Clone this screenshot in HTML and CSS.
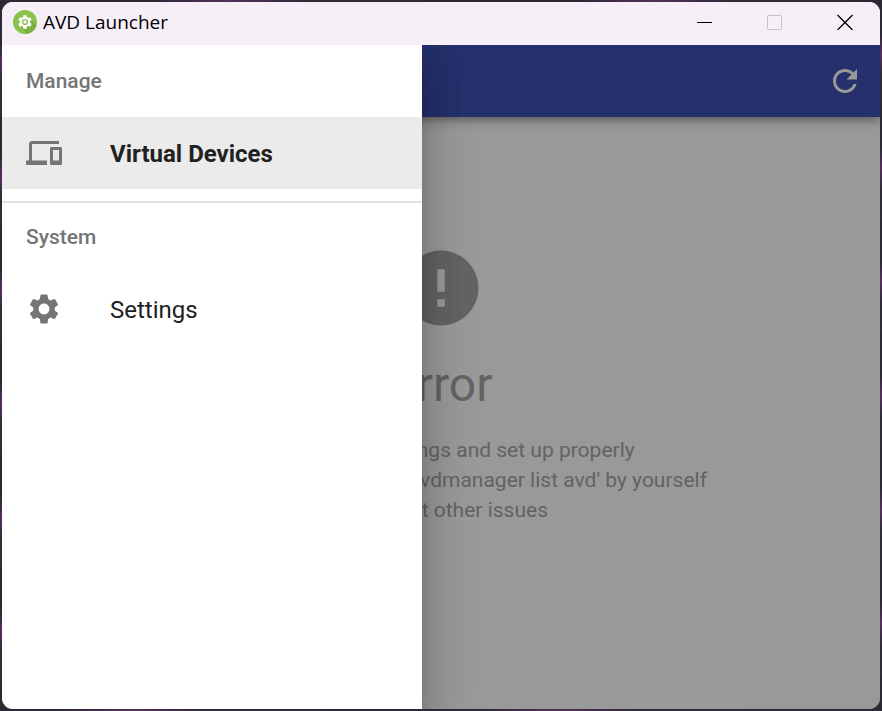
FILE: index.html
```html
<!DOCTYPE html>
<html lang="en">
<head>
<meta charset="utf-8">
<title>AVD Launcher</title>
<link rel="stylesheet" href="styles.css">
</head>
<body>
<div class="window">
  <header class="titlebar">
    <svg class="logo" viewBox="0 0 24 24" aria-hidden="true">
      <circle cx="12" cy="12" r="12" fill="#8bc34a"/>
      <path d="M17 9l6.500 6.500A12 12 0 0 1 14 23.800L7.500 17z" fill="#7cb043"/>
      <path transform="translate(3.800 3.800) scale(.68)" fill="#fff" fill-rule="evenodd" d="M19.430 12.980c.04-.32.07-.64.07-.98s-.03-.66-.07-.98l2.110-1.650c.19-.15.24-.42.12-.64l-2-3.460c-.12-.22-.39-.3-.61-.22l-2.490 1c-.52-.4-1.080-.73-1.690-.98l-.38-2.650C14.460 2.180 14.250 2 14 2h-4c-.25 0-.46.18-.49.42l-.38 2.650c-.61.25-1.170.59-1.690.98l-2.490-1c-.23-.09-.49 0-.61.22l-2 3.460c-.13.22-.07.49.12.64l2.110 1.650c-.04.32-.07.65-.07.98s.03.66.07.98l-2.110 1.650c-.19.15-.24.42-.12.64l2 3.460c.12.22.39.3.61.22l2.490-1c.52.4 1.080.73 1.690.98l.38 2.650c.03.24.24.42.49.42h4c.25 0 .46-.18.49-.42l.38-2.650c.61-.25 1.170-.59 1.690-.98l2.490 1c.23.09.49 0 .61-.22l2-3.460c.12-.22.07-.49-.12-.64zM12 16.500a4.500 4.500 0 1 1 0-9 4.500 4.500 0 0 1 0 9z"/>
      <circle cx="12" cy="12" r="1.800" fill="#fff"/>
    </svg>
    <span class="title">AVD Launcher</span>
    <button class="control" type="button" aria-label="Minimize"><svg viewBox="0 0 16 16"><path d="M0 8.500h15" stroke="#000"/></svg></button>
    <button class="control" type="button" aria-label="Maximize" disabled><svg viewBox="0 0 16 16"><rect x=".5" y="1.500" width="14" height="14" rx="1" stroke="#c5c0c6"/></svg></button>
    <button class="control" type="button" aria-label="Close"><svg viewBox="0 0 16 16"><path d="M.5 1l15 15M15.500 1l-15 15" stroke="#000" stroke-width="1.300"/></svg></button>
  </header>
  <div class="app">
    <div class="appbar">
      <button class="refresh" type="button" aria-label="Refresh"><svg viewBox="0 0 24 24"><path d="M17.650 6.350C16.200 4.900 14.210 4 12 4c-4.420 0-7.990 3.580-7.990 8s3.570 8 7.990 8c3.730 0 6.840-2.550 7.730-6h-2.080c-.82 2.330-3.040 4-5.650 4-3.310 0-6-2.690-6-6s2.690-6 6-6c1.660 0 3.140.69 4.220 1.780L13 11h7V4l-2.350 2.350z"/></svg></button>
    </div>
    <main class="content">
      <svg class="error-icon" viewBox="0 0 24 24" aria-hidden="true"><path d="M12 2C6.480 2 2 6.480 2 12s4.480 10 10 10 10-4.480 10-10S17.520 2 12 2zm1 15h-2v-2h2v2zm0-4h-2V7h2v6z"/></svg>
      <h1 class="heading">Error</h1>
      <p class="message">Please check settings and set up properly<br>You could also try to run 'avdmanager list avd' by yourself<br>to find out other issues</p>
    </main>
    <div class="backdrop"></div>
    <nav class="drawer">
      <h2 class="subheader">Manage</h2>
      <a class="item selected" href="#devices">
        <svg viewBox="0 0 24 24" aria-hidden="true"><path d="M4 6h18V4H4c-1.100 0-2 .9-2 2v11H0v3h14v-3H4V6zm19 2h-6c-.55 0-1 .45-1 1v10c0 .55.45 1 1 1h6c.55 0 1-.45 1-1V9c0-.55-.45-1-1-1zm-1 9h-4v-7h4v7z"/></svg>
        <span>Virtual Devices</span>
      </a>
      <hr class="divider">
      <h2 class="subheader">System</h2>
      <a class="item" href="#settings">
        <svg viewBox="0 0 24 24" aria-hidden="true"><path d="M19.140 12.940c.04-.3.06-.61.06-.94 0-.32-.02-.64-.07-.94l2.030-1.580c.18-.14.23-.41.12-.61l-1.920-3.320c-.12-.22-.37-.29-.59-.22l-2.390.96c-.5-.38-1.030-.7-1.620-.94l-.36-2.540c-.04-.24-.24-.41-.48-.41h-3.840c-.24 0-.43.17-.47.41l-.36 2.540c-.59.24-1.130.57-1.620.94l-2.390-.96c-.22-.08-.47 0-.59.22L2.740 8.870c-.12.21-.08.47.12.61l2.030 1.580c-.05.3-.09.63-.09.94s.02.64.07.94l-2.030 1.580c-.18.14-.23.41-.12.61l1.920 3.320c.12.22.37.29.59.22l2.390-.96c.5.38 1.030.7 1.620.94l.36 2.540c.05.24.24.41.48.41h3.840c.24 0 .44-.17.47-.41l.36-2.540c.59-.24 1.130-.56 1.620-.94l2.390.96c.22.08.47 0 .59-.22l1.920-3.320c.12-.22.07-.47-.12-.61l-2.010-1.580zM12 15.600c-1.980 0-3.600-1.620-3.600-3.600s1.620-3.600 3.600-3.600 3.600 1.620 3.600 3.600-1.620 3.600-3.600 3.600z"/></svg>
        <span>Settings</span>
      </a>
    </nav>
  </div>
</div>
</body>
</html>
```
FILE: styles.css
```css
* {
  box-sizing: border-box;
}

body {
  margin: 0;
  min-height: 100vh;
  padding: 2px;
  display: flex;
  font-family: Roboto, sans-serif;
  background: repeating-linear-gradient(165deg, #2b2934 0 40px, #54305c 60px, #2f2c38 80px 110px);
}

.window {
  flex: 1;
  display: flex;
  flex-direction: column;
  border-radius: 11px;
  overflow: hidden;
  background: #fff;
}

.titlebar {
  display: flex;
  align-items: center;
  height: 43px;
  padding: 0 0 3px 11px;
  background: #f6eff8;
}

.logo {
  width: 24px;
  height: 24px;
  margin-right: 6px;
}

.title {
  flex: 1;
  font: 19px/24px "Open Sans", sans-serif;
  color: #000;
}

.control {
  width: 70px;
  height: 40px;
  padding: 0;
  border: 0;
  background: none;
  display: flex;
  align-items: center;
  justify-content: center;
}

.control svg {
  width: 16px;
  height: 16px;
  fill: none;
}

.app {
  flex: 1;
  position: relative;
  display: flex;
  flex-direction: column;
  overflow: hidden;
}

.appbar {
  height: 72px;
  padding-right: 17px;
  display: flex;
  align-items: center;
  justify-content: flex-end;
  background: #3f51b5;
  box-shadow: 0 3px 6px -1px rgba(0, 0, 0, .2), 0 6px 8px rgba(0, 0, 0, .14), 0 2px 15px rgba(0, 0, 0, .12);
}

.refresh {
  padding: 0;
  border: 0;
  background: none;
  display: flex;
}

.refresh svg {
  width: 36px;
  height: 36px;
  fill: #fff;
}

.content {
  flex: 1;
  padding-top: 126px;
  display: flex;
  flex-direction: column;
  align-items: center;
  text-align: center;
  color: #a6a6a6;
}

.error-icon {
  width: 90px;
  height: 90px;
  fill: currentColor;
}

.heading {
  margin: 24px 0 22px;
  font-size: 48px;
  line-height: 56px;
  font-weight: 400;
}

.message {
  margin: 0;
  font-size: 21px;
  line-height: 30px;
}

.backdrop {
  position: absolute;
  inset: 0;
  background: rgba(0, 0, 0, .4);
}

.drawer {
  position: absolute;
  top: 0;
  bottom: 0;
  left: 0;
  width: 420px;
  background: #fff;
  box-shadow: 0 12px 15px -8px rgba(0, 0, 0, .2), 0 24px 36px 3px rgba(0, 0, 0, .14), 0 9px 45px 8px rgba(0, 0, 0, .12);
}

.subheader {
  margin: 0;
  padding: 0 24px;
  font-size: 21px;
  line-height: 72px;
  font-weight: 500;
  color: #757575;
}

.item {
  height: 72px;
  padding: 2px 24px 0;
  display: flex;
  align-items: center;
  gap: 48px;
  font-size: 24px;
  line-height: 36px;
  color: #212121;
  text-decoration: none;
}

.item svg {
  width: 36px;
  height: 36px;
  margin-bottom: 2px;
  fill: #757575;
}

.selected {
  background: #ebebeb;
  font-weight: 700;
}

.divider {
  margin: 12px 0 0;
  border: 0;
  border-top: 2px solid #e0e0e0;
}

.divider + .subheader {
  padding-bottom: 2px;
  line-height: 68px;
}
```
